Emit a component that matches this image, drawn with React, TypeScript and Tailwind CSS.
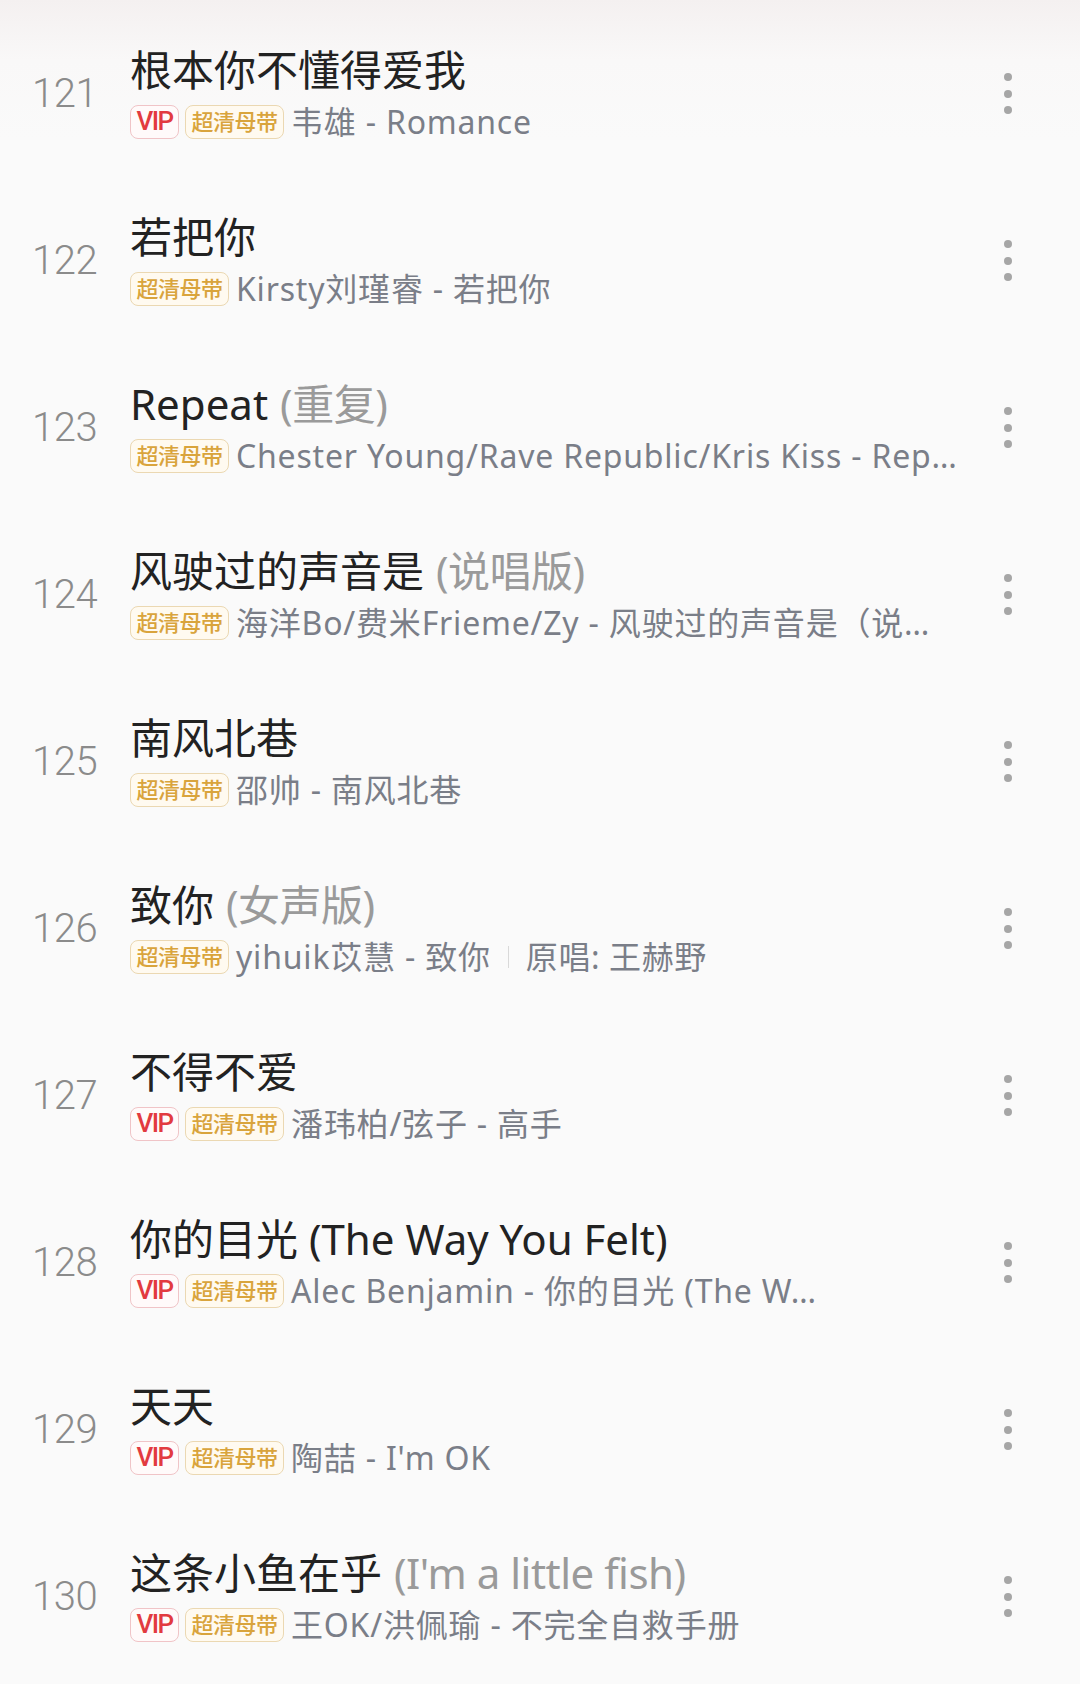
import React from "react";

type Song = {
    no: number;
    title: string;
    sub?: string;
    vip?: boolean;
    artist: string;
    origin?: string;
};

const songs: Song[] = [
    {no: 121, title: "根本你不懂得爱我", vip: true, artist: "韦雄 - Romance"},
    {no: 122, title: "若把你", artist: "Kirsty刘瑾睿 - 若把你"},
    {no: 123, title: "Repeat", sub: "(重复)", artist: "Chester Young/Rave Republic/Kris Kiss - Rep…"},
    {no: 124, title: "风驶过的声音是", sub: "(说唱版)", artist: "海洋Bo/费米Frieme/Zy - 风驶过的声音是（说…"},
    {no: 125, title: "南风北巷", artist: "邵帅 - 南风北巷"},
    {no: 126, title: "致你", sub: "(女声版)", artist: "yihuik苡慧 - 致你", origin: "原唱: 王赫野"},
    {no: 127, title: "不得不爱", vip: true, artist: "潘玮柏/弦子 - 高手"},
    {no: 128, title: "你的目光 (The Way You Felt)", vip: true, artist: "Alec Benjamin - 你的目光 (The W…"},
    {no: 129, title: "天天", vip: true, artist: "陶喆 - I'm OK"},
    {no: 130, title: "这条小鱼在乎", sub: "(I'm a little fish)", vip: true, artist: "王OK/洪佩瑜 - 不完全自救手册"},
];

const font = "font-['Noto_Sans','Noto_Sans_CJK_SC',sans-serif]";

const MoreDots = () => (
    <div className="flex flex-col items-center gap-[8.5px]">
        <span className="w-2 h-2 rounded-full bg-[#a6a6a6]"/>
        <span className="w-2 h-2 rounded-full bg-[#a6a6a6]"/>
        <span className="w-2 h-2 rounded-full bg-[#a6a6a6]"/>
    </div>
);

const Row = ({song}: {song: Song}) => {
    return (
        <div className="flex items-center h-[167px]">
            <div className="w-[130px] shrink-0 pl-[32px] text-[40px] leading-none text-[#8b8b8b] font-['Roboto',sans-serif] font-light tracking-[-0.5px]">
                {song.no}
            </div>
            <div className="flex-1 flex flex-col mb-[4px] min-w-0">
                <div className="h-[50px] flex items-center whitespace-nowrap text-[42px] text-[#222222] leading-none">
                    <span>{song.title}</span>
                    {song.sub && <span className="ml-[12px] text-[#9a9a9a] tracking-[-0.5px]">{song.sub}</span>}
                </div>
                <div className="mt-[10px] h-[34px] flex items-center whitespace-nowrap">
                    {song.vip && (
                        <span className="shrink-0 mr-[6px] w-[49px] h-[34px] flex items-center justify-center rounded-[8px] border border-[#f0c4c7] bg-[#fffafa] text-[#e23a40] text-[26px] font-medium font-['Roboto',sans-serif] tracking-[-1.5px]">
                            VIP
                        </span>
                    )}
                    <span className="shrink-0 w-[99px] h-[34px] flex items-center justify-center rounded-[8px] border border-[#ebd8b2] bg-[#fffaf0] text-[#d9a43c] text-[22px] font-medium tracking-[-0.5px]">
                        超清母带
                    </span>
                    <span className="shrink-0 ml-[7px] text-[32px] text-[#7a7e88] leading-none tracking-[0.8px]">{song.artist}</span>
                    {song.origin && (
                        <>
                            <span className="shrink-0 mx-[17px] w-px h-[22px] bg-[#d9d9d9]"/>
                            <span className="shrink-0 text-[32px] text-[#7a7e88] leading-none tracking-[0.6px]">{song.origin}</span>
                        </>
                    )}
                </div>
            </div>
            <div className="w-[110px] shrink-0 flex justify-end pr-[68px]">
                <MoreDots/>
            </div>
        </div>
    );
};

export default function App() {
    return (
        <div className={`${font} w-[1080px] h-[1684px] overflow-hidden pt-[10px] bg-[linear-gradient(to_bottom,#f4f0f0_0px,#f9f8f8_60px,#fafafa_140px,#fafafa_100%)]`}>
            {songs.map((s) => (
                <Row key={s.no} song={s}/>
            ))}
        </div>
    );
}
